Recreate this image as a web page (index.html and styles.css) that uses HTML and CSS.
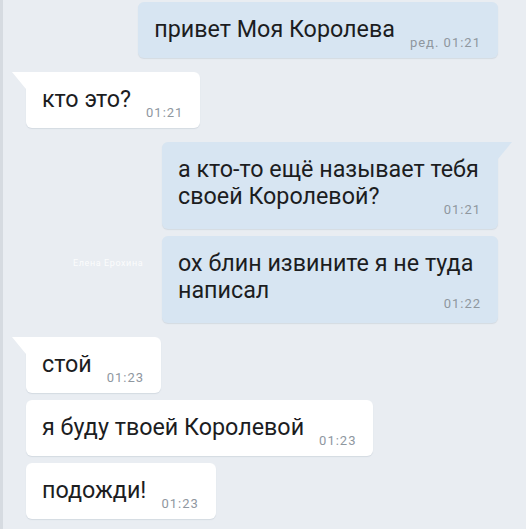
FILE: index.html
```html
<!DOCTYPE html>
<html lang="ru">
<head>
    <meta charset="UTF-8">
    <meta name="viewport" content="width=device-width, initial-scale=1.0">
    <title>Диалог</title>
    <link rel="stylesheet" href="styles.css">
</head>
<body>

    <div class="chat">
        <div class="msg out first">
            <span class="time">ред. 01:21</span>
            привет Моя Королева
        </div>

        <div class="msg in first">
            <span class="time">01:21</span>
            кто это?
        </div>

        <div class="msg out first wide">
            а кто-то ещё называет тебя своей Королевой?
            <span class="time">01:21</span>
        </div>
        <div class="msg out wide">
            ох блин извините я не туда написал
            <span class="time">01:22</span>
        </div>

        <div class="msg in first">
            <span class="time">01:23</span>
            стой
        </div>
        <div class="msg in">
            <span class="time">01:23</span>
            я буду твоей Королевой
        </div>
        <div class="msg in">
            <span class="time">01:23</span>
            подожди!
        </div>
    </div>

    <div class="watermark">Елена Ерохина</div>

</body>
</html>
```

FILE: styles.css
```css
body {
    margin: 0;
    height: 529px;
    background-color: #e9edf2;
    border-left: 3px solid #d6dbe1;
    font-family: 'Roboto', 'Noto Sans', sans-serif;
    color: #1c1d1f;
    position: relative;
    overflow: hidden;
}

.chat {
    display: flex;
    flex-direction: column;
    padding: 2px 28px 0 23px;
    gap: 7px;
}

.msg {
    position: relative;
    box-sizing: border-box;
    font-size: 23.3px;
    line-height: 27px;
    padding: 14px 17px 15px 16px;
    border-radius: 6px;
    box-shadow: 0 1px 1px rgba(60, 80, 110, 0.12);
}

.msg.first {
    margin-top: 7px;
}

.msg:first-child {
    margin-top: 0;
}

.out {
    align-self: flex-end;
    background-color: #d7e5f2;
}

.out.wide {
    width: 336px;
    padding-right: 11px;
    padding-bottom: 19px;
}

.in {
    align-self: flex-start;
    background-color: #ffffff;
}

.time {
    float: right;
    font-size: 13px;
    line-height: 13px;
    padding-top: 20px;
    margin: 0 0 -7px 15px;
    color: #8f979f;
    letter-spacing: 1px;
}

.wide .time {
    margin-right: 6px;
}

/* tail of the first bubble in a group */
.in.first {
    border-top-left-radius: 0;
}

.in.first::before {
    content: "";
    position: absolute;
    top: 0;
    left: -14px;
    width: 14px;
    height: 17px;
    background-color: #ffffff;
    clip-path: polygon(0 0, 100% 0, 100% 100%);
}

.out.first.wide {
    border-top-right-radius: 0;
}

.out.first.wide::after {
    content: "";
    position: absolute;
    top: 0;
    right: -14px;
    width: 14px;
    height: 17px;
    background-color: #d7e5f2;
    clip-path: polygon(0 0, 100% 0, 0 100%);
}

.watermark {
    position: absolute;
    left: 70px;
    top: 258px;
    font-size: 9px;
    color: rgba(255, 255, 255, 0.85);
    letter-spacing: 0.6px;
}
```
